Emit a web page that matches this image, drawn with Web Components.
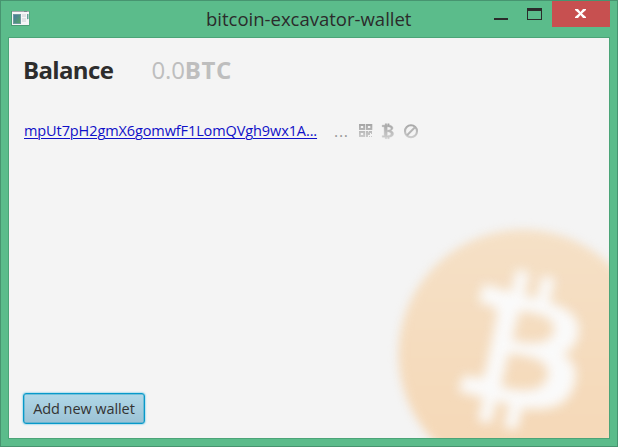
<!DOCTYPE html>
<html lang="en"><head><meta charset="utf-8"><title>bitcoin-excavator-wallet</title>
<style>html,body{margin:0;width:618px;height:447px;overflow:hidden}</style></head>
<body>
<wallet-window><wallet-content></wallet-content></wallet-window>
<script>
const define=(name,html)=>customElements.define(name,class extends HTMLElement{
  constructor(){super();this.attachShadow({mode:'open'}).innerHTML=html;}
});
define('title-bar',`<style>
:host{display:grid;grid-template-columns:197px 1fr 62px 58px 7px;height:36px;flex:none;align-items:start;color:#2b2b2b;font:18.5px/36px "Open Sans","Noto Sans",sans-serif}
svg{display:block}.title{white-space:nowrap;letter-spacing:0}
.app{margin:10px 0 0 2px}
</style>
<svg class="app" width="20" height="18" viewBox="0 0 20 18"><defs><linearGradient id="p" x1="0" y1="0" x2="1" y2="1"><stop stop-color="#4979a0"/><stop offset="1" stop-color="#54a368"/></linearGradient></defs><path d="M0 0h18.500v15H0z" fill="#4b9b75"/><path d="M1 0h17v14H1z" fill="#f5f5f7"/><path d="M1 0h17v1H1z" fill="#a3a7ac"/><path d="M13 0h3v1h-3z" fill="#7d858e"/><path d="M2 3h8v10H2z" fill="#6f9aa0"/><path d="M3 4h6v8H3z" fill="url(#p)"/><path d="M11 3h4v3h-4zM11 7h4v4h-4zM16 3h1v6h-1z" fill="#dfe2e5"/><path d="M16 3h1.500v5H16z" fill="#65a199"/></svg>
<div class="title"><slot></slot></div>
<svg width="62" height="36" viewBox="0 0 62 36"><path d="M4 17h14v2H4z" fill="#2b2b2b"/><path d="M37 7h15v12H37zM38 10v8h13v-8z" fill="#2b2b2b" fill-rule="evenodd"/></svg>
<svg width="58" height="36" viewBox="0 0 58 36"><path d="M0 0h58v26H0z" fill="#c75050"/><path d="M23 8h3l2.500 3L31 8h3v1l-4 3.500 4 3.500v1h-3l-2.500-3-2.500 3h-3v-1l4-3.500-4-3.500z" fill="#fff"/></svg>`);
define('wallet-window',`<style>
:host{display:flex;flex-direction:column;box-sizing:border-box;width:618px;height:447px;border:1px solid #479470;background:#5bbc8b;padding:0 7px 7px}
main{flex:1;border:1px solid #4ba477;min-height:0;display:flex}
title-bar{margin:0 -7px 0 1px}
</style><title-bar>bitcoin-excavator-wallet</title-bar><main><slot></slot></main>`);
define('coin-art',`<style>:host{display:block}svg{display:block}</style>
<svg width="600" height="400" viewBox="9 38 600 400"><defs><linearGradient id="g" x1="0" y1="0" x2="0" y2="1"><stop stop-color="#f5e0c6"/><stop offset="1" stop-color="#f5d7b5"/></linearGradient><filter id="a" color-interpolation-filters="sRGB"><feGaussianBlur stdDeviation="5"/></filter><filter id="b" x="-20%" y="-20%" width="140%" height="140%" color-interpolation-filters="sRGB"><feGaussianBlur stdDeviation="16"/></filter></defs>
<circle cx="523" cy="354" r="124.500" fill="url(#g)" filter="url(#a)"/>
<g transform="translate(380 210) scale(.33333)" fill="#fafafa" filter="url(#b)"><path fill-rule="evenodd" d="M310 222L394 246L409 178L448 186L433 257L470 266L486 197L526 206L507 277C568 295 600 325 596 365C594 400 572 423 547 432C584 452 595 485 583 524C567 582 518 606 427 594L411 660L371 652L388 582L349 574L333 641L293 632L310 563L234 544L252 495L291 503Q309 508 315 487L350 322Q355 295 338 289L296 277ZM418 303L396 390C455 406 515 402 522 362C529 321 475 309 418 303ZM386 430L363 530C430 546 492 547 503 497C513 449 445 438 386 430Z"/></g></svg>`);
define('balance-line',`<style>:host{display:grid;grid-template-columns:128.500px auto;justify-content:start;font:24px/36px "Open Sans","Noto Sans",sans-serif;color:#2d2d2d;height:36px;white-space:nowrap}b{font-weight:700}.label{letter-spacing:-.65px}.value{color:#bebebe;letter-spacing:-.2px}.value b{letter-spacing:.7px}</style>
<b class="label">Balance</b><span class="value">0.0<b>BTC</b></span>`);
define('address-row',`<style>:host{display:flex;height:24px;font:14.500px/24px "Open Sans","Noto Sans",sans-serif;white-space:nowrap}
a{color:#1010c8;text-decoration:underline;text-decoration-thickness:1px;text-underline-offset:2px;width:310px;letter-spacing:-.1px}
.dots{color:#999;font-size:16px;width:24.500px;letter-spacing:.7px}svg{display:block;flex:none}</style>
<a>mpUt7pH2gmX6gomwfF1LomQVgh9wx1A...</a><span class="dots">...</span>
<svg width="62" height="24" viewBox="0 0 62 24"><defs><linearGradient id="i" x1="0" y1="5" x2="0" y2="19" gradientUnits="userSpaceOnUse"><stop stop-color="#a5a5a5"/><stop offset="1" stop-color="#cdcdcd"/></linearGradient></defs><g fill="url(#i)"><path fill-rule="evenodd" d="M-.2 5h6.400v6H-.2zm2 2v2h2.400V7zM6.900 5h6.400v6H6.900zm2 2v2h2.400V7zM-.2 12h6.400v6H-.2zm2 2v2h2.400v-2zM7 12h2l1 2v-2h3v3h-1v-1h-1v2H9v2H7zm3 5h1v1h-1zm2 0h1v1h-1z"/><path fill-rule="evenodd" stroke="url(#i)" stroke-width=".4" transform="translate(-.8 .2)" d="M24 6h3V4.500h1.500V6h1V4.500H31V6c5 .5 4.500 4.500 1.500 5.500C37 12.500 36 18 31 18v1.500h-1.500V18h-1v1.500H27V18h-3v-1.500h2V7.500h-2zm5 1.500V11c5 0 5-3.500 0-3.500zm0 5v4c5 0 5-4 0-4z"/></g><circle cx="52" cy="12.300" r="6" fill="none" stroke="url(#i)" stroke-width="2.100"/><path d="M48 16.300l8-8" stroke="#b5b5b5" stroke-width="2"/></svg>`);
define('wallet-button',`<style>:host{display:block}button{display:block;box-sizing:border-box;width:122px;height:31px;padding:0;border:1px solid #0799ca;border-radius:3px;background:linear-gradient(#b1d8e8,#9bc2d5);box-shadow:0 0 2px #26b0dc,inset 0 0 0 .5px #38a8cb;font:14.500px/28px "Open Sans","Noto Sans",sans-serif;color:#333;letter-spacing:-.08px;white-space:nowrap}</style><button><slot></slot></button>`);
define('wallet-content',`<style>:host{display:grid;width:600px;height:400px;background:#f4f4f4;overflow:hidden}
coin-art,.content{grid-area:1/1}.content{box-sizing:border-box;display:flex;flex-direction:column;padding:14px;z-index:1}
address-row{margin:31px 0 0 1px}wallet-button{margin-top:auto}</style>
<coin-art></coin-art><div class="content"><balance-line></balance-line><address-row></address-row><wallet-button>Add new wallet</wallet-button></div>`);
</script></body></html>
